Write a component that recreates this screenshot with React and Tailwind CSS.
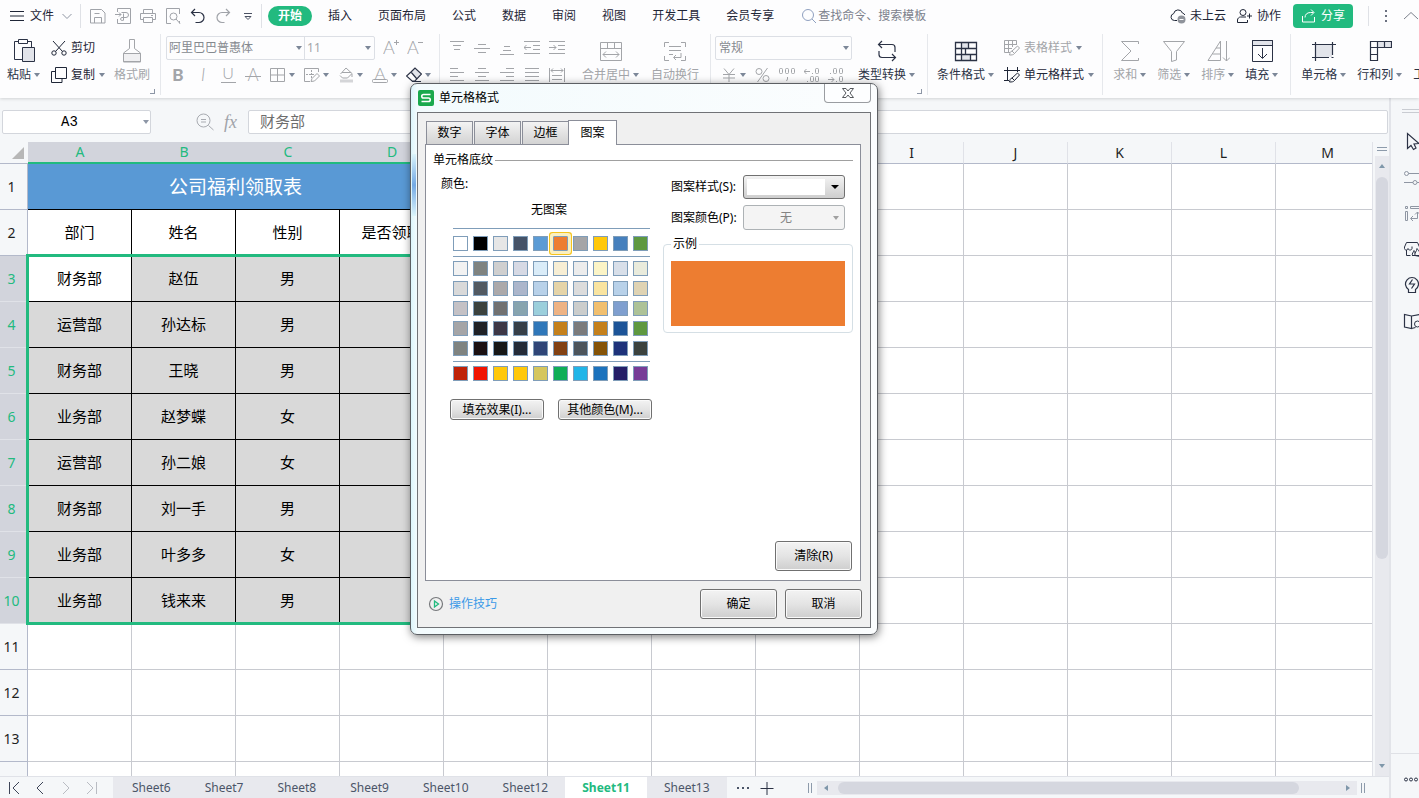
const tabs = ['插入', '页面布局', '公式', '数据', '审阅', '视图', '开发工具', '会员专享'];

const columns = ['A', 'B', 'C', 'D', 'E', 'F', 'G', 'H', 'I', 'J', 'K', 'L', 'M'];

const people = [
  ['财务部', '赵伍', '男'],
  ['运营部', '孙达标', '男'],
  ['财务部', '王晓', '男'],
  ['业务部', '赵梦蝶', '女'],
  ['运营部', '孙二娘', '女'],
  ['财务部', '刘一手', '男'],
  ['业务部', '叶多多', '女'],
  ['业务部', '钱来来', '男'],
];

const sheets = ['Sheet6', 'Sheet7', 'Sheet8', 'Sheet9', 'Sheet10', 'Sheet12', 'Sheet11', 'Sheet13'];

const themeColors = ['#ffffff', '#000000', '#e6e6e6', '#455368', '#5b9bd5', '#ed7d31', '#a5a5a7', '#ffc80a', '#4680bd', '#5e9840'];

const shadeColors = [
  '#f2f2f2', '#7f8380', '#cfcfcf', '#d6d9e4', '#daecf8', '#f7eed4', '#ececec', '#fbf4c6', '#d8dfe9', '#e9ebdc',
  '#d9d9d9', '#525a62', '#aca9aa', '#acb6cb', '#b8d1e9', '#e5d4a8', '#dcdcdc', '#f9e4a0', '#b8d1e9', '#dfd3b3',
  '#c4c1c5', '#3b423e', '#717171', '#87a4af', '#9bcfdc', '#eeb384', '#cbcdcc', '#f1bf6e', '#7f9fcf', '#adc297',
  '#a5a5a7', '#1f2126', '#3d3746', '#363f48', '#2f77b9', '#c4801c', '#7b7b7c', '#c4801c', '#1c5498', '#5e9840',
  '#7f8380', '#1a1012', '#171717', '#242b38', '#2f4577', '#824113', '#4d555c', '#855307', '#1d327a', '#3b423e',
];

const standardColors = ['#bf2208', '#f01402', '#ffc80a', '#ffc80a', '#d5c65d', '#0eae57', '#20b5e8', '#1b72bd', '#251f68', '#773c97'];

const Icon = ({ size = 16, children, className = '' }) => (
  <svg
    width={size}
    height={size}
    viewBox={`0 0 ${size} ${size}`}
    fill="none"
    stroke="currentColor"
    className={`shrink-0 ${className}`}
    aria-hidden="true"
  >
    {children}
  </svg>
);

const Letter = ({ children, x = 8, y = 14, size = 17, weight = 300, style }) => (
  <text
    x={x}
    y={y}
    fontSize={size}
    fontWeight={weight}
    fontStyle={style}
    fontFamily="Lato, sans-serif"
    textAnchor="middle"
    fill="currentColor"
    stroke="none"
  >
    {children}
  </text>
);

const Caret = ({ className = 'text-[#7c8798]' }) => (
  <svg width="6" height="4" viewBox="0 0 6 4" className={`shrink-0 ${className}`} aria-hidden="true">
    <path d="M0 0h6L3 4z" fill="currentColor" />
  </svg>
);

const Divider = () => <div className="mt-[3px] h-[61px] w-px shrink-0 bg-[#e6e8ec]" />;

const Tool = ({ label, caret, children, muted = true }) => (
  <button aria-label={label} className={`flex shrink-0 items-center gap-[3px] ${muted ? 'text-[#a3a5a9]' : 'text-[#2b3245]'}`}>
    {children}
    {caret && <Caret />}
  </button>
);

const BigTool = ({ label, caret = true, muted, children }) => (
  <button className={`flex shrink-0 flex-col items-center gap-px pt-2 ${muted ? 'text-[#a3a5a9]' : 'text-[#2b3245]'}`}>
    <Icon size={24}>{children}</Icon>
    <span className="flex h-[22px] items-center gap-[3px]">
      {label}
      {caret && <Caret />}
    </span>
  </button>
);

const MenuBar = () => (
  <header className="flex h-[31px] shrink-0 items-center whitespace-nowrap text-[#1f2637]">
    <button className="ml-[9px] flex items-center gap-[5px]">
      <Icon><path d="M1 3.500h14M1 8h14M1 12.500h14" /></Icon>
      文件
      <Icon size={12} className="ml-[2px] text-[#8f96a3]"><path d="M1.500 4L6 8.500 10.500 4" /></Icon>
    </button>
    <div className="ml-[7px] h-6 w-px bg-[#dfe1e6]" />
    <div className="ml-[9px] flex items-center gap-[9px] text-[#a0a3a9]">
      <button aria-label="保存">
        <Icon><path d="M.5 1.500h11l3.500 3.500v10H.5zM4.500 15V9.500h7V15M4.500 5.500h5" /></Icon>
      </button>
      <button aria-label="输出为PDF">
        <Icon><path d="M2.500 4V.5h13v15h-13V11M0 6.500h6M4 4.500l2 2-2 2M8.500 12.500V5.500M6.500 4.500h4.500a2 2 0 0 1 0 5H7a1.500 1.500 0 1 0 1.500 2" /></Icon>
      </button>
      <button aria-label="打印">
        <Icon><path d="M3.500 5.500v-4h9v4M3.500 11.500h-3v-6h15v6h-3M3.500 9.500h9v5h-9zM11 7.500h2" /></Icon>
      </button>
      <button aria-label="打印预览">
        <Icon><path d="M6 15.500H1.500V.5h13V6M14.500 13v2.500" /><circle cx="8.500" cy="8.500" r="3.500" /><path d="M11 11l4 4.500" /></Icon>
      </button>
      <button aria-label="撤销" className="text-[#2b3245]">
        <Icon><path strokeWidth="1.200" d="M5 1L1.500 4.500 5 8M1.500 4.500H9a5 5 0 0 1 0 10H5.500" /></Icon>
      </button>
      <button aria-label="恢复">
        <Icon><path strokeWidth="1.200" d="M11 1l3.500 3.500L11 8M14.500 4.500H7a5 5 0 0 0 0 10h2.500" /></Icon>
      </button>
      <button aria-label="更多" className="text-[#4b5263]">
        <Icon><path d="M4 5.500h8M5 8.500l3 3 3-3z" /></Icon>
      </button>
    </div>
    <div className="ml-[5px] h-6 w-px bg-[#dfe1e6]" />
    <nav className="ml-[6px] flex items-center gap-[26px]">
      <button className="-mr-[10px] h-5 rounded-full bg-[#22ba7f] px-[10px] font-bold text-white">开始</button>
      {tabs.map((tab) => (
        <button key={tab}>{tab}</button>
      ))}
    </nav>
    <label className="ml-[27px] flex items-center gap-px text-[#7c818c]">
      <Icon className="text-[#8fa0c0]"><circle cx="7" cy="7" r="5.500" /><path d="M11 11l4 4" /></Icon>
      <input placeholder="查找命令、搜索模板" className="w-32 bg-transparent outline-none placeholder:text-[#7c818c]" />
    </label>
    <div className="ml-auto flex shrink-0 items-center">
      <button className="flex items-center gap-1">
        <Icon>
          <path d="M7 12.500H4.500a3.500 3.500 0 0 1-.8-6.900 4.500 4.500 0 0 1 8.700-.6 3.500 3.500 0 0 1 2.400 2" />
          <circle cx="11.500" cy="11.500" r="4" fill="#8f939b" stroke="none" />
          <path stroke="#fff" d="M9.500 11.500h4" />
        </Icon>
        未上云
      </button>
      <button className="ml-[11px] flex items-center gap-1">
        <Icon>
          <circle cx="6" cy="4.500" r="3" />
          <path d="M9 9H3.500C2 9 .5 10.500.5 12v2.500h10V12M12.500 5.500v5M10 8h5" />
        </Icon>
        协作
      </button>
      <button className="ml-3 flex h-6 w-[60px] items-center justify-center gap-[4px] rounded bg-[#22ba7f] text-white">
        <Icon><path d="M1.500 8v6h12V9M4 9.500c0-3 2-5 5.500-5h3M10 1.500l3 3-3 3" /></Icon>
        分享
      </button>
      <div className="ml-[15px] h-5 w-px bg-[#dfe1e6]" />
      <button aria-label="更多选项" className="ml-[9px] text-[#6b7180]">
        <Icon><path stroke="none" fill="currentColor" d="M7 2h2v2H7zM7 7h2v2H7zM7 12h2v2H7z" /></Icon>
      </button>
      <button aria-label="收起功能区" className="ml-[9px] text-[#7c818c]">
        <Icon><path d="M1 11l7-6.500 7 6.500" /></Icon>
      </button>
    </div>
  </header>
);

const Launcher = () => (
  <span className="absolute right-[5px] bottom-[4px] size-[5px] border-r border-b border-[#8d96a6]" />
);

const Ribbon = () => (
  <div className="flex h-[67px] shrink-0 overflow-hidden whitespace-nowrap text-[#1f2637] *:shrink-0">
    <div className="relative flex pr-[10px] pl-[7px]">
      <BigTool label="粘贴">
        <path d="M6.500 2.500h-4v18h8M17.500 2.500h2V9M6.500.5h9v4h-9zM15.500 2.500h4" />
        <path fill="#e2e4ea" d="M10.500 8.500h12v14h-12z" />
      </BigTool>
      <div className="ml-[11px] flex flex-col gap-1 pt-[5px]">
        <button className="flex h-6 items-center gap-1">
          <Icon>
            <path d="M2 1l9.500 10.500M14 1L4.500 11.500" />
            <circle cx="3" cy="13" r="2.200" /><circle cx="13" cy="13" r="2.200" />
          </Icon>
          剪切
        </button>
        <button className="flex h-[22px] items-center gap-1">
          <Icon><path d="M4.500.5h11v11h-11zM4.500 4.500h-4v11H11v-4" /></Icon>
          复制
          <Caret />
        </button>
      </div>
      <div className="ml-[9px] flex">
        <BigTool label="格式刷" caret={false} muted>
          <path d="M9.500 9.500v-9h5v9l6 4.500v9h-17v-9z" />
          <path fill="#f0f0f2" d="M3.500 14.500h17v8h-17z" />
        </BigTool>
      </div>
      <Launcher />
    </div>
    <Divider />
    <div className="flex flex-col gap-1 pt-[5px] pr-2 pl-[5px]">
      <div className="flex h-6 items-center">
        <div className="relative flex h-6 items-center rounded-xs border border-[#dcdfe5]">
          <select aria-label="字体" className="h-full w-[138px] appearance-none border-r border-[#dcdfe5] pl-[2px] text-[#85898f]">
            <option>阿里巴巴普惠体</option>
          </select>
          <select aria-label="字号" className="h-full w-[69px] appearance-none pl-[2px] text-[#a3a5a9]">
            <option>11</option>
          </select>
          <Caret className="pointer-events-none absolute left-[129px] text-[#7c8798]" />
          <Caret className="pointer-events-none absolute right-[3px] text-[#7c8798]" />
        </div>
        <div className="ml-2 flex gap-2">
          <Tool label="增大字号"><Icon><Letter x={6} y={14} size={18}>A</Letter><path d="M11 2.500h5M13.500 0v5" /></Icon></Tool>
          <Tool label="减小字号"><Icon><Letter x={6} y={14} size={18}>A</Letter><path d="M11 2.500h5" /></Icon></Tool>
        </div>
      </div>
      <div className="flex h-[22px] items-center gap-[9px] pl-1">
        <Tool label="加粗"><Icon><Letter weight={900} size={17}>B</Letter></Icon></Tool>
        <Tool label="倾斜"><Icon><Letter style="italic">I</Letter></Icon></Tool>
        <Tool label="下划线"><Icon><Letter y={12} size={16}>U</Letter><path d="M1 15.500h15" /></Icon></Tool>
        <Tool label="删除线"><Icon><Letter>A</Letter><path d="M0 9.500h16" /></Icon></Tool>
        <Tool label="边框" caret><Icon><path d="M.5 1.500h14v13H.5zM.5 8h14M7.500 1.500v13" /></Icon></Tool>
        <Tool label="绘图边框" caret>
          <Icon>
            <path d="M6 14.500H.5v-13h14V5" /><path strokeDasharray="2 1" d="M2 7.500h8M7.500 3v8" />
            <path d="M7 14.500l1-3 5-5 2.500 2.500-5 5z" />
          </Icon>
        </Tool>
        <Tool label="填充颜色" caret>
          <Icon><path d="M2.500 7L8 1l6 5.500-4.500 4.500h-5L2 8.500M4 5.500h9M14 7v3" /><path strokeWidth="3" stroke="#d4d5d8" d="M2 14h13" /></Icon>
        </Tool>
        <Tool label="字体颜色" caret><Icon><Letter y={12} size={16}>A</Letter><rect x=".5" y="12.500" width="15" height="3" rx="1" /></Icon></Tool>
        <Tool label="清除" caret muted={false}>
          <Icon><path fill="#e2e4ea" stroke="none" d="M5 5l4-4 6.500 6-5 5z" /><path strokeWidth="1.200" d="M5 5L.5 9l5.500 5h3l6.500-7L9 1zM5 5l5.500 6.500M6 14.500h9" /></Icon>
        </Tool>
      </div>
    </div>
    <Divider />
    <div className="flex pr-[11px] pl-[9px]">
      <div className="flex flex-col gap-1 pt-[5px]">
        <div className="flex h-6 items-center gap-[9px]">
          <Tool label="顶端对齐"><Icon><path d="M1 1.500h14M4 5.500h8M5 9.500h6" /></Icon></Tool>
          <Tool label="垂直居中"><Icon><path d="M4 4.500h8M0 8.500h16M4 12.500h8" /></Icon></Tool>
          <Tool label="底端对齐"><Icon><path d="M5 6.500h6M4 10.500h8M1 14.500h14" /></Icon></Tool>
          <Tool label="减少缩进"><Icon><path d="M0 1.500h16M9 5.500h7M9 9.500h7M0 13.500h16M0 7.500h7M2.500 5L0 7.500 2.500 10" /></Icon></Tool>
          <Tool label="增加缩进"><Icon><path d="M0 1.500h16M9 5.500h7M9 9.500h7M0 13.500h16M0 7.500h7M4.500 5L7 7.500 4.500 10" /></Icon></Tool>
        </div>
        <div className="flex h-[22px] items-center gap-[9px]">
          <Tool label="左对齐"><Icon><path d="M1 1.500h8M1 5.500h14M1 9.500h8M1 13.500h14" /></Icon></Tool>
          <Tool label="水平居中"><Icon><path d="M4 1.500h8M1 5.500h14M4 9.500h8M1 13.500h14" /></Icon></Tool>
          <Tool label="右对齐"><Icon><path d="M7 1.500h8M1 5.500h14M7 9.500h8M1 13.500h14" /></Icon></Tool>
          <Tool label="两端对齐"><Icon><path d="M1 1.500h14M1 5.500h14M1 9.500h14M1 13.500h14" /></Icon></Tool>
          <Tool label="分散对齐"><Icon><path d="M.5 1v14M15.500 1v14M2 3.500h12M4 1.500l-2 2 2 2M12 1.500l2 2-2 2M3 8.500h10M3 12.500h10" /></Icon></Tool>
        </div>
      </div>
      <div className="ml-[17px] flex gap-3">
        <BigTool label="合并居中" muted>
          <path d="M1.500 3.500h21v18h-21zM1.500 9.500h21M8.500 3.500v6M15.500 3.500v6M4 15.500h16M7 12.500l-3 3 3 3M17 12.500l3 3-3 3" />
        </BigTool>
        <BigTool label="自动换行" caret={false} muted>
          <path d="M1.500 8V3.500H6M18 3.500h4.500V8M22.500 17v4.500H18M6 21.500H1.500V17M6 7.500h12M6 11.500h12M6 15.500h4M18 14v4.500h-7M13 16l-2.500 2.500L13 21" />
        </BigTool>
      </div>
    </div>
    <Divider />
    <div className="relative flex gap-[6px] pr-3 pl-1">
      <div className="flex flex-col gap-1 pt-[5px]">
        <div className="relative flex h-6 items-center">
          <select aria-label="数字格式" className="h-6 w-[137px] appearance-none rounded-xs border border-[#dcdfe5] pl-[3px] text-[#85898f]">
            <option>常规</option>
          </select>
          <Caret className="pointer-events-none absolute right-[3px] text-[#7c8798]" />
        </div>
        <div className="flex h-[22px] items-center gap-2 pl-[6px]">
          <Tool label="货币" caret><Icon><path d="M3 1.500l5 6 5-6M8 7.500V15M2 7.500h12M2 11h12" /></Icon></Tool>
          <Tool label="百分比"><Icon><circle cx="5" cy="4.500" r="3" /><circle cx="12" cy="11.500" r="3" /><path d="M13.500 1L3.500 15" /></Icon></Tool>
          <Tool label="千位分隔">
            <Icon size={18}><rect x="1.500" y="2.500" width="3" height="5" rx="1" /><rect x="7.500" y="2.500" width="3" height="5" rx="1" /><rect x="13.500" y="2.500" width="3" height="5" rx="1" /><path d="M9.500 11v2l-1 2" /></Icon>
          </Tool>
          <Tool label="增加小数位">
            <Icon><path d="M0 4.500h6M2.500 2L0 4.500 2.500 7M8 6.500h1M3 14.500h1" /><rect x="11.500" y="1.500" width="3" height="5" rx="1" /><rect x="6.500" y="9.500" width="3" height="5" rx="1" /><rect x="11.500" y="9.500" width="3" height="5" rx="1" /></Icon>
          </Tool>
          <Tool label="减少小数位">
            <Icon><path d="M0 12.500h6M3.500 10L6 12.500 3.500 15M8 14.500h1M2 6.500h1" /><rect x="11.500" y="9.500" width="3" height="5" rx="1" /><rect x="5.500" y="1.500" width="3" height="5" rx="1" /><rect x="11.500" y="1.500" width="3" height="5" rx="1" /></Icon>
          </Tool>
        </div>
      </div>
      <BigTool label="类型转换">
        <path strokeWidth="1.200" d="M7 2L3.500 5.500 7 9M3.500 5.500H17a3 3 0 0 1 3 3V13M17 15l3.500 3.500L17 22M20.500 18.500H7a3 3 0 0 1-3-3V12" />
      </BigTool>
      <Launcher />
    </div>
    <Divider />
    <div className="flex gap-[10px] pr-2 pl-[9px]">
      <BigTool label="条件格式">
        <path fill="#e2e4ea" stroke="none" d="M7 4h7v5H7zM7 16h9v5H7z" />
        <path strokeWidth="1.300" d="M1.500 3.500h21v18h-21zM1.500 9.500h21M1.500 15.500h21M7.500 3.500v18M14.500 3.500v6M11.500 9.500v6M16.500 15.500v6" />
      </BigTool>
      <div className="flex flex-col gap-1 pt-[5px]">
        <button className="flex h-6 items-center gap-1 text-[#a3a5a9]">
          <Icon><path d="M6 12.500H.5v-12h12V5M.5 4.500h12M.5 8.500H8M4.500.5v12M8.500.5V7M8 11l5.500-5 2 2-5 5.500zM8 11c-2 .5-2 2-2.500 4 2 0 4 0 5-1.500" /></Icon>
          表格样式
          <Caret />
        </button>
        <button className="flex h-[22px] items-center gap-1">
          <Icon><path d="M0 3.500h16M3.500 0v14M0 13.500h5M13.500 0v5M8 11l5.500-5 2 2-5 5.500zM8 11c-2 .5-2 2-2.500 4 2 0 4 0 5-1.500" /></Icon>
          单元格样式
          <Caret />
        </button>
      </div>
    </div>
    <Divider />
    <div className="flex gap-[11px] pr-3 pl-[10px]">
      <BigTool label="求和" muted><path d="M20.500 5V2.500h-17l9.500 9.500-9.500 9.500h17V19" /></BigTool>
      <BigTool label="筛选" muted><path d="M1.500 2.500h21l-8 10v8.500l-5 1.500V12.500z" /></BigTool>
      <BigTool label="排序" muted><path d="M2 21.500L14.500 2v19.500zM10 9h4.500M6.500 15h8M20.500 2v20M17 18.500l3.500 3.500 3.500-3.500" /></BigTool>
      <BigTool label="填充">
        <path fill="#e2e4ea" d="M2.500 1.500h20v5h-20z" /><path d="M2.500 1.500h20v21h-20zM12.500 9v10M8 15l4.500 4.500L17 15" />
      </BigTool>
    </div>
    <Divider />
    <div className="flex gap-[11px] pl-[10px]">
      <BigTool label="单元格">
        <path fill="#e2e4ea" stroke="none" d="M4 6h16v12H4z" />
        <path strokeWidth="1.200" d="M0 5.500h24M0 18.500h17M3.500 3v19M20.500 3v13M19.500 18.500h2" />
      </BigTool>
      <BigTool label="行和列">
        <path fill="#e2e4ea" stroke="none" d="M9 3h14v6H9z" />
        <path strokeWidth="1.200" d="M2.500 2.500h21v6h-14v13h-7zM9.500 2.500v6M16.500 2.500v6M2.500 8.500h7M2.500 15.500h7" />
      </BigTool>
      <BigTool label="工作表">
        <path d="M2.500 3.500h20v18h-20z" />
      </BigTool>
    </div>
  </div>
);

const FormulaBar = () => (
  <div className="flex items-center pt-3 pr-px pb-2 pl-[2px]">
    <div className="relative flex items-center">
      <input
        aria-label="名称框"
        defaultValue="A3"
        className="h-6 w-[149px] rounded-xs border border-[#d3d6dc] bg-white pr-[14px] text-center font-['Liberation_Mono',monospace] text-[14px] outline-none"
      />
      <Caret className="absolute right-[2px] text-[#8d96a6]" />
    </div>
    <Icon size={18} className="ml-[45px] text-[#a8abb1]">
      <circle cx="7.500" cy="7.500" r="6.500" /><path d="M12.500 12.500l5 4.500M5 6.500h5M5 9h5" />
    </Icon>
    <label htmlFor="formula" className="ml-[10px] w-[24px] font-['Liberation_Serif',serif] text-[18px] leading-5 text-[#a0a3a9] italic">fx</label>
    <input
      id="formula"
      defaultValue="财务部"
      className="h-6 min-w-0 flex-1 rounded-xs border border-[#d3d6dc] bg-white pb-1 pl-[11px] text-[15px] text-[#6e6e6e] outline-none"
    />
  </div>
);

const Grid = () => (
  <div className="relative min-w-0 flex-1 overflow-hidden border-r border-[#e0e2e8] bg-white">
    <table className="w-[1380px] table-fixed border-separate border-spacing-0 text-center text-[15px]">
      <colgroup>
        <col className="w-[28px]" />
        {columns.map((col) => (
          <col key={col} className="w-[104px]" />
        ))}
      </colgroup>
      <thead>
        <tr className="h-[22px] text-[14px] leading-5">
          <th aria-label="全选" className="border-b border-[#b3b9ca] bg-[#f5f7f9] p-0">
            <svg width="12" height="12" viewBox="0 0 12 12" className="ml-auto mr-[4px]"><path d="M12 0v12H0z" fill="#b7b7b7" /></svg>
          </th>
          {columns.map((col, i) => (
            <th
              key={col}
              className={
                i < 4
                  ? 'border-b-2 border-[#22ba7f] bg-[#d2d4dc] p-0 font-normal text-[#22ba7f]'
                  : 'border-r border-b border-r-[#e0e2e8] border-b-[#b3b9ca] bg-[#f5f7f9] p-0 font-normal text-[#1f1f1f]'
              }
            >
              {col}
            </th>
          ))}
        </tr>
      </thead>
      <tbody>
        <tr className="h-[46px]">
          <RowHead n={1} />
          <td colSpan={4} className="border-r border-b border-black bg-[#5999d5] p-0 text-[19px] text-white">公司福利领取表</td>
          <EmptyCells count={9} />
        </tr>
        <tr className="h-[46px]">
          <RowHead n={2} />
          {['部门', '姓名', '性别', '是否领取'].map((text) => (
            <td key={text} className="border-r border-b border-black p-0 pb-[2px]">{text}</td>
          ))}
          <EmptyCells count={9} />
        </tr>
        {people.map((row, r) => (
          <tr key={r} className="h-[46px]">
            <RowHead n={r + 3} selected />
            {[...row, ''].map((text, c) => (
              <td key={c} className={`border-r border-b border-black p-0 pb-[2px] ${r === 0 && c === 0 ? 'bg-white' : 'bg-[#d9d9d9]'}`}>
                {text}
              </td>
            ))}
            <EmptyCells count={9} />
          </tr>
        ))}
        {[11, 12, 13, 14].map((n) => (
          <tr key={n} className="h-[46px]">
            <RowHead n={n} />
            <EmptyCells count={13} />
          </tr>
        ))}
      </tbody>
    </table>
    {/* selection frame for A3:D10 */}
    <div className="pointer-events-none absolute top-[112px] left-[26px] h-[371px] w-[419px] border-3 border-[#22ba7f]" />
  </div>
);

const RowHead = ({ n, selected }) => (
  <th
    className={`border-r border-b p-0 pr-[4px] text-[14px] font-normal ${
      selected ? 'border-r-[#22ba7f] border-b-[#e0e2e8] bg-[#d2d4dc] text-[#22ba7f]' : 'border-[#b3b9ca] bg-[#f5f7f9] text-[#1f1f1f]'
    }`}
  >
    {n}
  </th>
);

const EmptyCells = ({ count }) =>
  Array.from({ length: count }, (_, i) => <td key={i} className="border-r border-b border-[#c8cad0] p-0" />);

const VerticalScroll = () => (
  <div className="ml-[2px] flex w-[14px] shrink-0 flex-col items-center bg-[#e8e9ee]">
    <div className="flex h-[14px] w-full shrink-0 items-center bg-[#f5f7f9]">
      <div className="mx-auto h-[4px] w-[10px] border-y border-[#8d9bab]" />
    </div>
    <Caret className="mt-[8px] rotate-180 text-[#7f97aa]" />
    <div className="mt-[9px] h-[382px] w-3 rounded-full bg-[#d5d7df]" />
    <Caret className="mt-auto mb-[8px] text-[#7f97aa]" />
  </div>
);

const SheetBar = () => (
  <footer className="flex h-[22px] shrink-0 items-center border-t border-[#e0e2e8] whitespace-nowrap text-[#4b5568]">
    <div className="flex w-[113px] shrink-0 items-center gap-[10px] pl-[6px] text-[#3e4558]">
      <button aria-label="第一个"><Icon><path d="M3.500 2v12M13 2L7 8l6 6" /></Icon></button>
      <button aria-label="上一个"><Icon><path d="M11 2L5 8l6 6" /></Icon></button>
      <button aria-label="下一个" className="text-[#b9bcc3]"><Icon><path d="M5 2l6 6-6 6" /></Icon></button>
      <button aria-label="最后一个" className="text-[#b9bcc3]"><Icon><path d="M3 2l6 6-6 6M12.500 2v12" /></Icon></button>
    </div>
    <div className="flex h-full bg-[#e8e9ee] pl-[2px]">
      {sheets.map((name) => (
        <button
          key={name}
          className={name === 'Sheet11' ? 'bg-white px-[17px] font-bold text-[#22ba7f]' : 'px-[17px]'}
        >
          {name}
        </button>
      ))}
    </div>
    <button aria-label="更多工作表" className="ml-2">
      <Icon><path stroke="none" fill="currentColor" d="M2 7h2v2H2zM7 7h2v2H7zM12 7h2v2h-2z" /></Icon>
    </button>
    <button aria-label="新建工作表" className="ml-2 text-[#2b3245]">
      <Icon><path d="M1.500 8.500h13M8 2v13" /></Icon>
    </button>
    <div className="ml-[33px] h-[10px] w-[4px] border-x border-[#8d9bab]" />
    <div className="ml-[5px] flex h-[14px] flex-1 items-center bg-[#e8e9ee] px-[6px]">
      <Caret className="rotate-90 text-[#7f97aa]" />
      <div className="mr-[46px] ml-[9px] h-3 flex-1 rounded-full bg-[#d5d7df]" />
      <Caret className="-rotate-90 text-[#7f97aa]" />
    </div>
    <div className="mr-6 ml-[4px] h-[10px] w-[4px] border-x border-[#8d9bab]" />
  </footer>
);

const SidePanel = () => (
  <aside className="flex w-[30px] shrink-0 flex-col overflow-hidden border-l-2 border-[#e2e4e9] pt-[11px] pl-[11px] text-[#2b3245]">
    <div className="h-1 w-6 shrink-0 border-y border-[#c9ccd2]" />
    <div className="mt-[18px] flex flex-col gap-[16px]">
      <button aria-label="选择"><Icon size={20}><path strokeWidth="1.200" d="M5.500 2.500v15l3.500-3 2.500 4 2.500-1.500-2-4 5-.5z" /></Icon></button>
      <button aria-label="属性" className="text-[#8f96a3]">
        <Icon size={20}><circle cx="4.500" cy="6.500" r="2" /><path d="M6.500 6.500H20M2 15.500h9M15 15.500h5" /><circle cx="13" cy="15.500" r="2" /></Icon>
      </button>
      <button aria-label="分析" className="text-[#8f96a3]">
        <Icon size={20}><path d="M3.500 3.500h2v2h-2zM20 3.500H8.500v2H20M3.500 8.500h2v9h-2zM9 15.500h6.500V9M11 13l-2.500 2.500L11 18M13 11.500L15.500 9l2.500 2.500" /></Icon>
      </button>
      <button aria-label="素材">
        <Icon size={20}>
          <path d="M4.500 3.500h11l2 4.500M4.500 3.500l-2 4.500v1.500c0 2 3.500 2 3.500 0 0 2 4 2 4 0V7.500M4.500 11v5.500h4" />
          <path d="M10.500 16.500c-1-2 1-3 1.500-5 1 1 1 2 1 3M13 16.500c-1-3 2-4 2-7 2 3 4 4 3 8zM10 16.500h9" />
        </Icon>
      </button>
      <button aria-label="推荐">
        <Icon size={20}><path strokeWidth="1.200" d="M6.500 14.500a6.500 6.500 0 1 1 7 0v3h-7zM10.500 4.500L7.500 9h5l-3 4.500" /></Icon>
      </button>
      <button aria-label="帮助">
        <Icon size={20}><path strokeWidth="1.200" d="M9.500 5L2.500 3.500V16l7 1.500zM9.500 5L18 3.500v6M9.500 17.500l4-1" /><circle cx="15.500" cy="13" r="3" /></Icon>
      </button>
    </div>
    <div className="mt-auto -ml-[11px] border-t border-[#dfe1e6] pt-[16px] pb-[8px] pl-[11px]">
      <button aria-label="更多面板" className="flex">
        <Icon size={20}><circle cx="4" cy="9.500" r="1.500" /><circle cx="9" cy="9.500" r="1.500" /><circle cx="14" cy="9.500" r="1.500" /></Icon>
      </button>
    </div>
  </aside>
);

const Swatches = ({ colors, selected }) => (
  <div className="grid w-[197px] grid-cols-[repeat(10,15px)] gap-[5px] border-t border-[#7f9db9]">
    {colors.map((color, i) => (
      <button
        key={i}
        aria-label={color}
        style={{ backgroundColor: color }}
        className={`size-[15px] border border-[#7f9db9] ${
          color === selected ? 'rounded-[1px] shadow-[0_0_0_3px_#fbf0c0,0_0_0_4px_#f5c41c]' : ''
        }`}
      />
    ))}
  </div>
);

const DialogButton = ({ children, className = 'h-[30px] w-[77px]' }) => (
  <button
    className={`rounded-[3px] border border-[#707070] bg-linear-to-b from-[#f3f3f3] via-[#e4e4e4] to-[#cecece] whitespace-nowrap shadow-[inset_0_0_0_1px_#fafafa] ${className}`}
  >
    {children}
  </button>
);

const FormatDialog = () => (
  <div
    role="dialog"
    aria-label="单元格格式"
    className="absolute top-[83px] left-[410px] w-[468px] rounded-[7px] border border-[#5c5f63] bg-linear-to-r from-[#dcf5fb] via-[#f3fbfd] via-[6px] to-[#fbfdfe] px-[6px] pb-[6px] text-black shadow-[1px_2px_8px_rgba(0,0,0,0.5)]"
  >
    {/* blue title row of the sheet showing through the glass frame */}
    <div className="absolute top-[70px] left-px h-[62px] w-[4px] bg-linear-to-b from-[#dcf5fb] via-[#74a9e4] to-[#dcf5fb]" />
    <div className="flex h-7 items-start">
      <div className="flex h-7 items-center gap-[5px] pl-px">
        <Icon>
          <rect width="16" height="16" rx="2" fill="#1aa94d" stroke="none" />
          <path stroke="#fff" strokeWidth="1.600" d="M12.500 4.500h-7a1.700 1.700 0 0 0 0 3.500h5a1.700 1.700 0 0 1 0 3.500h-7" />
        </Icon>
        单元格格式
      </div>
      <button aria-label="关闭" className="ml-auto flex h-[19px] w-[47px] items-center justify-center rounded-b-[4px] border border-t-0 border-[#9a9da1] bg-white/60 text-[#55585d]">
        <Icon size={12}><path d="M.5 1.500h3.500l2 2.500 2-2.500h3.500L8 6l3.500 4.500H8L6 8l-2 2.500H.5L4 6z" /></Icon>
      </button>
    </div>
    <div className="border border-[#707276] bg-[#f0f0f0] pt-[7px] pr-[9px] pb-2 pl-[7px]">
      <div role="tablist" className="flex h-6 items-end pl-px">
        {['数字', '字体', '边框'].map((tab) => (
          <button
            key={tab}
            role="tab"
            className="mr-px h-[23px] w-[47px] border border-b-0 border-[#8b8e99] bg-linear-to-b from-[#f3f3f3] to-[#d3d3d3]"
          >
            {tab}
          </button>
        ))}
        <button role="tab" aria-selected="true" className="relative -mb-px -ml-[2px] h-[25px] w-[49px] border border-b-0 border-[#8b8e99] bg-white">
          图案
        </button>
      </div>
      <div className="flex min-h-[437px] flex-col border border-[#8b8e99] bg-white px-[7px] pt-[5px] pb-[9px]">
        <div className="flex h-5 items-center gap-[2px]">
          单元格底纹
          <div className="h-px flex-1 bg-[#a0a0a0]" />
        </div>
        <div className="flex justify-between">
          <div className="pt-1">
            <div className="h-5 pl-2 leading-5">颜色:</div>
            <button className="mt-[6px] ml-[20px] h-5 w-[192px]">无图案</button>
            <div className="mt-2 ml-[20px] grid grid-cols-1 gap-[5px] *:pt-[4px] [&>*:first-child]:pt-[7px]">
              <Swatches colors={themeColors} selected="#ed7d31" />
              <Swatches colors={shadeColors} />
              <Swatches colors={standardColors} />
            </div>
            <div className="mt-[18px] ml-[17px] flex gap-[14px]">
              <DialogButton className="h-[21px] w-[94px]">填充效果(I)...</DialogButton>
              <DialogButton className="h-[21px] w-[94px]">其他颜色(M)...</DialogButton>
            </div>
          </div>
          <div className="w-[190px] pt-[5px]">
            <div className="relative flex items-center justify-between pr-2 pl-2">
              <label htmlFor="pattern-style">图案样式(S):</label>
              <select
                id="pattern-style"
                className="h-6 w-[102px] appearance-none rounded-[3px] border border-[#707070] bg-linear-to-b from-[#f3f3f3] to-[#cecece]"
              />
              <div className="pointer-events-none absolute right-[28px] h-4 w-[78px] bg-white" />
              <svg width="8" height="4" viewBox="0 0 8 4" className="pointer-events-none absolute right-[14px]"><path d="M0 0h8L4 4z" /></svg>
            </div>
            <div className="relative mt-[6px] flex items-center justify-between pr-2 pl-2">
              <label htmlFor="pattern-color">图案颜色(P):</label>
              <select
                id="pattern-color"
                disabled
                className="h-[25px] w-[102px] appearance-none rounded-[3px] border border-[#adb2b5] bg-[#f4f4f4] pl-[36px] text-[#838383]"
              >
                <option>无</option>
              </select>
              <Caret className="pointer-events-none absolute right-[14px] text-[#a0a0a0]" />
            </div>
            <fieldset className="mt-[5px] rounded-[4px] border border-[#d5dfe5] px-[7px] pb-[6px]">
              <legend className="px-[2px] leading-[18px]">示例</legend>
              <div className="mt-[8px] h-[65px] bg-[#ed7d31]" />
            </fieldset>
          </div>
        </div>
        <div className="mt-auto flex justify-end pr-px">
          <DialogButton>清除(R)</DialogButton>
        </div>
      </div>
      <div className="mt-2 -mr-px flex items-center gap-2">
        <a href="#tips" className="mr-auto flex items-center gap-[5px] pl-[3px] text-[#3b9ae8]">
          <Icon className="text-[#77797c]">
            <circle cx="8" cy="8" r="6.500" strokeWidth="1.200" /><path stroke="#22ba7f" strokeWidth="1.300" d="M6.500 5v6l4-3z" />
          </Icon>
          操作技巧
        </a>
        <DialogButton>确定</DialogButton>
        <DialogButton>取消</DialogButton>
      </div>
    </div>
  </div>
);

export default function App() {
  return (
    <div className="relative flex h-screen flex-col overflow-hidden bg-[#f5f7f9] font-['Noto_Sans','Noto_Sans_CJK_SC',sans-serif] text-[12px] leading-4 text-black">
      <div className="z-10 shrink-0 bg-[#fdfdfe] shadow-[0_1px_3px_rgba(0,0,0,0.15)]">
        <MenuBar />
        <Ribbon />
      </div>
      <div className="flex min-h-0 flex-1">
        <main className="flex min-w-0 flex-1 flex-col">
          <FormulaBar />
          <div className="flex min-h-0 flex-1">
            <Grid />
            <VerticalScroll />
          </div>
          <SheetBar />
        </main>
        <SidePanel />
      </div>
      <div className="absolute inset-0 z-20">
        <FormatDialog />
      </div>
    </div>
  );
}
